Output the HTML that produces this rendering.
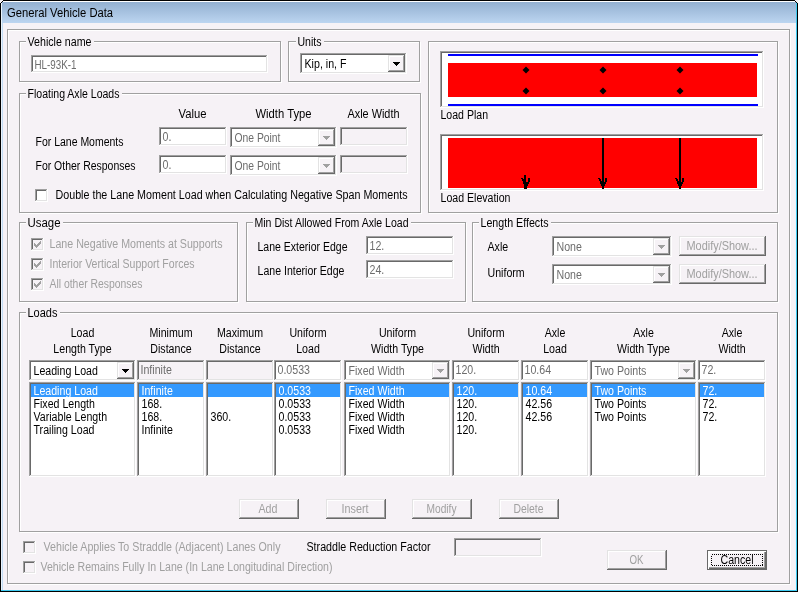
<!DOCTYPE html>
<html><head><meta charset="utf-8"><style>
html,body{margin:0;padding:0;background:#f6f2f6;overflow:hidden}
svg{display:block;will-change:transform}
text{font-family:"Liberation Sans",sans-serif}
rect{shape-rendering:crispEdges}
</style></head><body>
<svg width="798" height="592" viewBox="0 0 798 592">
<rect x="0" y="0" width="798" height="592" fill="#000"/>
<rect x="1" y="1" width="796" height="590" fill="#eaf4fc"/>
<rect x="1" y="1" width="796" height="1" fill="#ffffff"/>
<defs><linearGradient id="tb" x1="0" y1="0" x2="0" y2="1"><stop offset="0" stop-color="#93b0d1"/><stop offset="1" stop-color="#bcd5f0"/></linearGradient></defs>
<rect x="2" y="2" width="794" height="21" fill="url(#tb)"/>
<rect x="3" y="23" width="792" height="567" fill="#f6f2f6"/>
<rect x="2" y="23" width="1" height="567" fill="#c2dcf4"/>
<rect x="796" y="1" width="1" height="590" fill="#3fcaf0"/>
<rect x="1" y="590" width="796" height="1" fill="#3fcaf0"/>
<text x="7.1" y="17" fill="#000" font-size="12.5" textLength="105.99" lengthAdjust="spacingAndGlyphs">General Vehicle Data</text>
<rect x="0" y="0" width="1" height="1" fill="#f6f2f6"/>
<rect x="1" y="0" width="1" height="1" fill="#f6f2f6"/>
<rect x="2" y="0" width="1" height="1" fill="#f6f2f6"/>
<rect x="0" y="1" width="1" height="1" fill="#f6f2f6"/>
<rect x="0" y="2" width="1" height="1" fill="#f6f2f6"/>
<rect x="1" y="1" width="1" height="1" fill="#f6f2f6"/>
<rect x="3" y="0" width="1" height="1" fill="#000"/>
<rect x="2" y="1" width="1" height="1" fill="#000"/>
<rect x="1" y="2" width="1" height="1" fill="#000"/>
<rect x="0" y="3" width="1" height="1" fill="#000"/>
<rect x="797" y="0" width="1" height="1" fill="#f6f2f6"/>
<rect x="796" y="0" width="1" height="1" fill="#f6f2f6"/>
<rect x="795" y="0" width="1" height="1" fill="#f6f2f6"/>
<rect x="797" y="1" width="1" height="1" fill="#f6f2f6"/>
<rect x="797" y="2" width="1" height="1" fill="#f6f2f6"/>
<rect x="796" y="1" width="1" height="1" fill="#f6f2f6"/>
<rect x="794" y="0" width="1" height="1" fill="#000"/>
<rect x="795" y="1" width="1" height="1" fill="#000"/>
<rect x="796" y="2" width="1" height="1" fill="#000"/>
<rect x="797" y="3" width="1" height="1" fill="#000"/>
<rect x="8" y="30" width="783" height="1" fill="#ffffff"/>
<rect x="8" y="584" width="783" height="1" fill="#ffffff"/>
<rect x="8" y="30" width="1" height="555" fill="#ffffff"/>
<rect x="790" y="30" width="1" height="555" fill="#ffffff"/>
<rect x="7" y="29" width="783" height="1" fill="#a0a0a0"/>
<rect x="7" y="583" width="783" height="1" fill="#a0a0a0"/>
<rect x="7" y="29" width="1" height="555" fill="#a0a0a0"/>
<rect x="789" y="29" width="1" height="555" fill="#a0a0a0"/>
<rect x="20" y="42" width="262" height="1" fill="#ffffff"/>
<rect x="20" y="82" width="262" height="1" fill="#ffffff"/>
<rect x="20" y="42" width="1" height="41" fill="#ffffff"/>
<rect x="281" y="42" width="1" height="41" fill="#ffffff"/>
<rect x="19" y="41" width="262" height="1" fill="#a0a0a0"/>
<rect x="19" y="81" width="262" height="1" fill="#a0a0a0"/>
<rect x="19" y="41" width="1" height="41" fill="#a0a0a0"/>
<rect x="280" y="41" width="1" height="41" fill="#a0a0a0"/>
<rect x="26" y="39" width="68" height="5" fill="#f6f2f6"/>
<text x="27.5" y="46" fill="#000" font-size="12" textLength="64.0" lengthAdjust="spacingAndGlyphs">Vehicle name</text>
<rect x="31" y="55" width="237" height="18" fill="#ffffff"/>
<rect x="31" y="55" width="237" height="1" fill="#a0a0a0"/>
<rect x="31" y="55" width="1" height="18" fill="#a0a0a0"/>
<rect x="31" y="72" width="237" height="1" fill="#ffffff"/>
<rect x="267" y="55" width="1" height="18" fill="#ffffff"/>
<rect x="32" y="56" width="235" height="1" fill="#696969"/>
<rect x="32" y="56" width="1" height="16" fill="#696969"/>
<rect x="32" y="71" width="235" height="1" fill="#e3e3e3"/>
<rect x="266" y="56" width="1" height="16" fill="#e3e3e3"/>
<text x="34.5" y="69" fill="#6d6d6d" font-size="12" textLength="42.0" lengthAdjust="spacingAndGlyphs">HL-93K-1</text>
<rect x="289" y="42" width="132" height="1" fill="#ffffff"/>
<rect x="289" y="82" width="132" height="1" fill="#ffffff"/>
<rect x="289" y="42" width="1" height="41" fill="#ffffff"/>
<rect x="420" y="42" width="1" height="41" fill="#ffffff"/>
<rect x="288" y="41" width="132" height="1" fill="#a0a0a0"/>
<rect x="288" y="81" width="132" height="1" fill="#a0a0a0"/>
<rect x="288" y="41" width="1" height="41" fill="#a0a0a0"/>
<rect x="419" y="41" width="1" height="41" fill="#a0a0a0"/>
<rect x="296" y="39" width="28" height="5" fill="#f6f2f6"/>
<text x="297.5" y="46" fill="#000" font-size="12" textLength="24.0" lengthAdjust="spacingAndGlyphs">Units</text>
<rect x="300" y="53" width="107" height="21" fill="#ffffff"/>
<rect x="300" y="53" width="107" height="1" fill="#a0a0a0"/>
<rect x="300" y="53" width="1" height="21" fill="#a0a0a0"/>
<rect x="300" y="73" width="107" height="1" fill="#ffffff"/>
<rect x="406" y="53" width="1" height="21" fill="#ffffff"/>
<rect x="301" y="54" width="105" height="1" fill="#696969"/>
<rect x="301" y="54" width="1" height="19" fill="#696969"/>
<rect x="301" y="72" width="105" height="1" fill="#e3e3e3"/>
<rect x="405" y="54" width="1" height="19" fill="#e3e3e3"/>
<rect x="388" y="55" width="17" height="17" fill="#f6f2f6"/>
<rect x="388" y="71" width="17" height="1" fill="#696969"/>
<rect x="404" y="55" width="1" height="17" fill="#696969"/>
<rect x="388" y="55" width="16" height="1" fill="#e3e3e3"/>
<rect x="388" y="55" width="1" height="16" fill="#e3e3e3"/>
<rect x="389" y="70" width="15" height="1" fill="#a0a0a0"/>
<rect x="403" y="56" width="1" height="15" fill="#a0a0a0"/>
<rect x="389" y="56" width="14" height="1" fill="#ffffff"/>
<rect x="389" y="56" width="1" height="14" fill="#ffffff"/>
<rect x="393" y="62" width="7" height="1" fill="#000"/>
<rect x="394" y="63" width="5" height="1" fill="#000"/>
<rect x="395" y="64" width="3" height="1" fill="#000"/>
<rect x="396" y="65" width="1" height="1" fill="#000"/>
<text x="304.5" y="68" fill="#000" font-size="12" textLength="42.0" lengthAdjust="spacingAndGlyphs">Kip, in, F</text>
<rect x="429" y="42" width="350" height="1" fill="#ffffff"/>
<rect x="429" y="213" width="350" height="1" fill="#ffffff"/>
<rect x="429" y="42" width="1" height="172" fill="#ffffff"/>
<rect x="778" y="42" width="1" height="172" fill="#ffffff"/>
<rect x="428" y="41" width="350" height="1" fill="#a0a0a0"/>
<rect x="428" y="212" width="350" height="1" fill="#a0a0a0"/>
<rect x="428" y="41" width="1" height="172" fill="#a0a0a0"/>
<rect x="777" y="41" width="1" height="172" fill="#a0a0a0"/>
<rect x="440" y="51" width="324" height="57" fill="#ffffff"/>
<rect x="440" y="51" width="324" height="1" fill="#a0a0a0"/>
<rect x="440" y="51" width="1" height="57" fill="#a0a0a0"/>
<rect x="440" y="107" width="324" height="1" fill="#ffffff"/>
<rect x="763" y="51" width="1" height="57" fill="#ffffff"/>
<rect x="441" y="52" width="322" height="1" fill="#696969"/>
<rect x="441" y="52" width="1" height="55" fill="#696969"/>
<rect x="441" y="106" width="322" height="1" fill="#e3e3e3"/>
<rect x="762" y="52" width="1" height="55" fill="#e3e3e3"/>
<rect x="448" y="63" width="309" height="34" fill="#ff0000"/>
<rect x="448" y="54" width="310" height="2" fill="#0000ff"/>
<rect x="448" y="104" width="310" height="2" fill="#0000ff"/>
<path d="M522.5 70 L526 66.5 L529.5 70 L526 73.5 Z" fill="#000"/>
<path d="M522.5 91 L526 87.5 L529.5 91 L526 94.5 Z" fill="#000"/>
<path d="M599.5 70 L603 66.5 L606.5 70 L603 73.5 Z" fill="#000"/>
<path d="M599.5 91 L603 87.5 L606.5 91 L603 94.5 Z" fill="#000"/>
<path d="M676.5 70 L680 66.5 L683.5 70 L680 73.5 Z" fill="#000"/>
<path d="M676.5 91 L680 87.5 L683.5 91 L680 94.5 Z" fill="#000"/>
<text x="440.5" y="119" fill="#000" font-size="12" textLength="47.5" lengthAdjust="spacingAndGlyphs">Load Plan</text>
<rect x="440" y="134" width="324" height="57" fill="#ffffff"/>
<rect x="440" y="134" width="324" height="1" fill="#a0a0a0"/>
<rect x="440" y="134" width="1" height="57" fill="#a0a0a0"/>
<rect x="440" y="190" width="324" height="1" fill="#ffffff"/>
<rect x="763" y="134" width="1" height="57" fill="#ffffff"/>
<rect x="441" y="135" width="322" height="1" fill="#696969"/>
<rect x="441" y="135" width="1" height="55" fill="#696969"/>
<rect x="441" y="189" width="322" height="1" fill="#e3e3e3"/>
<rect x="762" y="135" width="1" height="55" fill="#e3e3e3"/>
<rect x="448" y="138" width="309" height="50" fill="#ff0000"/>
<rect x="524" y="175" width="2" height="14" fill="#000"/>
<rect x="521" y="178" width="2" height="1" fill="#000"/>
<rect x="528" y="178" width="2" height="1" fill="#000"/>
<rect x="522" y="179" width="2" height="1" fill="#000"/>
<rect x="528" y="179" width="2" height="1" fill="#000"/>
<rect x="522" y="180" width="2" height="1" fill="#000"/>
<rect x="528" y="180" width="2" height="1" fill="#000"/>
<rect x="523" y="181" width="2" height="1" fill="#000"/>
<rect x="528" y="181" width="2" height="1" fill="#000"/>
<rect x="523" y="182" width="6" height="1" fill="#000"/>
<rect x="523" y="183" width="6" height="1" fill="#000"/>
<rect x="524" y="184" width="4" height="1" fill="#000"/>
<rect x="524" y="185" width="4" height="1" fill="#000"/>
<rect x="525" y="186" width="2" height="1" fill="#000"/>
<rect x="525" y="187" width="2" height="1" fill="#000"/>
<rect x="525" y="188" width="2" height="1" fill="#000"/>
<rect x="602" y="138" width="2" height="51" fill="#000"/>
<rect x="598" y="178" width="2" height="1" fill="#000"/>
<rect x="605" y="178" width="2" height="1" fill="#000"/>
<rect x="599" y="179" width="2" height="1" fill="#000"/>
<rect x="605" y="179" width="2" height="1" fill="#000"/>
<rect x="599" y="180" width="2" height="1" fill="#000"/>
<rect x="605" y="180" width="2" height="1" fill="#000"/>
<rect x="600" y="181" width="2" height="1" fill="#000"/>
<rect x="605" y="181" width="2" height="1" fill="#000"/>
<rect x="600" y="182" width="6" height="1" fill="#000"/>
<rect x="600" y="183" width="6" height="1" fill="#000"/>
<rect x="601" y="184" width="4" height="1" fill="#000"/>
<rect x="601" y="185" width="4" height="1" fill="#000"/>
<rect x="602" y="186" width="2" height="1" fill="#000"/>
<rect x="602" y="187" width="2" height="1" fill="#000"/>
<rect x="602" y="188" width="2" height="1" fill="#000"/>
<rect x="679" y="138" width="2" height="51" fill="#000"/>
<rect x="675" y="178" width="2" height="1" fill="#000"/>
<rect x="682" y="178" width="2" height="1" fill="#000"/>
<rect x="676" y="179" width="2" height="1" fill="#000"/>
<rect x="682" y="179" width="2" height="1" fill="#000"/>
<rect x="676" y="180" width="2" height="1" fill="#000"/>
<rect x="682" y="180" width="2" height="1" fill="#000"/>
<rect x="677" y="181" width="2" height="1" fill="#000"/>
<rect x="682" y="181" width="2" height="1" fill="#000"/>
<rect x="677" y="182" width="6" height="1" fill="#000"/>
<rect x="677" y="183" width="6" height="1" fill="#000"/>
<rect x="678" y="184" width="4" height="1" fill="#000"/>
<rect x="678" y="185" width="4" height="1" fill="#000"/>
<rect x="679" y="186" width="2" height="1" fill="#000"/>
<rect x="679" y="187" width="2" height="1" fill="#000"/>
<rect x="679" y="188" width="2" height="1" fill="#000"/>
<text x="440.5" y="202" fill="#000" font-size="12" textLength="70.0" lengthAdjust="spacingAndGlyphs">Load Elevation</text>
<rect x="20" y="94" width="402" height="1" fill="#ffffff"/>
<rect x="20" y="213" width="402" height="1" fill="#ffffff"/>
<rect x="20" y="94" width="1" height="120" fill="#ffffff"/>
<rect x="421" y="94" width="1" height="120" fill="#ffffff"/>
<rect x="19" y="93" width="402" height="1" fill="#a0a0a0"/>
<rect x="19" y="212" width="402" height="1" fill="#a0a0a0"/>
<rect x="19" y="93" width="1" height="120" fill="#a0a0a0"/>
<rect x="420" y="93" width="1" height="120" fill="#a0a0a0"/>
<rect x="26" y="91" width="96" height="5" fill="#f6f2f6"/>
<text x="27.5" y="98" fill="#000" font-size="12" textLength="92.0" lengthAdjust="spacingAndGlyphs">Floating Axle Loads</text>
<text x="178.5" y="118" fill="#000" font-size="12" textLength="28.0" lengthAdjust="spacingAndGlyphs">Value</text>
<text x="255.5" y="118" fill="#000" font-size="12" textLength="56.0" lengthAdjust="spacingAndGlyphs">Width Type</text>
<text x="347.5" y="118" fill="#000" font-size="12" textLength="52.0" lengthAdjust="spacingAndGlyphs">Axle Width</text>
<text x="35.5" y="146" fill="#000" font-size="12" textLength="88.0" lengthAdjust="spacingAndGlyphs">For Lane Moments</text>
<text x="35.5" y="170" fill="#000" font-size="12" textLength="100.0" lengthAdjust="spacingAndGlyphs">For Other Responses</text>
<rect x="159" y="127" width="68" height="19" fill="#ffffff"/>
<rect x="159" y="127" width="68" height="1" fill="#a0a0a0"/>
<rect x="159" y="127" width="1" height="19" fill="#a0a0a0"/>
<rect x="159" y="145" width="68" height="1" fill="#ffffff"/>
<rect x="226" y="127" width="1" height="19" fill="#ffffff"/>
<rect x="160" y="128" width="66" height="1" fill="#696969"/>
<rect x="160" y="128" width="1" height="17" fill="#696969"/>
<rect x="160" y="144" width="66" height="1" fill="#e3e3e3"/>
<rect x="225" y="128" width="1" height="17" fill="#e3e3e3"/>
<text x="162.5" y="141" fill="#6d6d6d" font-size="12" textLength="8.86" lengthAdjust="spacingAndGlyphs">0.</text>
<rect x="230" y="127" width="107" height="21" fill="#ffffff"/>
<rect x="230" y="127" width="107" height="1" fill="#a0a0a0"/>
<rect x="230" y="127" width="1" height="21" fill="#a0a0a0"/>
<rect x="230" y="147" width="107" height="1" fill="#ffffff"/>
<rect x="336" y="127" width="1" height="21" fill="#ffffff"/>
<rect x="231" y="128" width="105" height="1" fill="#696969"/>
<rect x="231" y="128" width="1" height="19" fill="#696969"/>
<rect x="231" y="146" width="105" height="1" fill="#e3e3e3"/>
<rect x="335" y="128" width="1" height="19" fill="#e3e3e3"/>
<rect x="318" y="129" width="17" height="17" fill="#f6f2f6"/>
<rect x="318" y="145" width="17" height="1" fill="#696969"/>
<rect x="334" y="129" width="1" height="17" fill="#696969"/>
<rect x="318" y="129" width="16" height="1" fill="#e3e3e3"/>
<rect x="318" y="129" width="1" height="16" fill="#e3e3e3"/>
<rect x="319" y="144" width="15" height="1" fill="#a0a0a0"/>
<rect x="333" y="130" width="1" height="15" fill="#a0a0a0"/>
<rect x="319" y="130" width="14" height="1" fill="#ffffff"/>
<rect x="319" y="130" width="1" height="14" fill="#ffffff"/>
<rect x="323" y="136" width="7" height="1" fill="#a0a0a0"/>
<rect x="324" y="137" width="5" height="1" fill="#a0a0a0"/>
<rect x="325" y="138" width="3" height="1" fill="#a0a0a0"/>
<rect x="326" y="139" width="1" height="1" fill="#a0a0a0"/>
<text x="234.5" y="142" fill="#6d6d6d" font-size="12" textLength="46.0" lengthAdjust="spacingAndGlyphs">One Point</text>
<rect x="340" y="127" width="68" height="19" fill="#f6f2f6"/>
<rect x="340" y="127" width="68" height="1" fill="#a0a0a0"/>
<rect x="340" y="127" width="1" height="19" fill="#a0a0a0"/>
<rect x="340" y="145" width="68" height="1" fill="#ffffff"/>
<rect x="407" y="127" width="1" height="19" fill="#ffffff"/>
<rect x="341" y="128" width="66" height="1" fill="#696969"/>
<rect x="341" y="128" width="1" height="17" fill="#696969"/>
<rect x="341" y="144" width="66" height="1" fill="#e3e3e3"/>
<rect x="406" y="128" width="1" height="17" fill="#e3e3e3"/>
<rect x="159" y="155" width="68" height="19" fill="#ffffff"/>
<rect x="159" y="155" width="68" height="1" fill="#a0a0a0"/>
<rect x="159" y="155" width="1" height="19" fill="#a0a0a0"/>
<rect x="159" y="173" width="68" height="1" fill="#ffffff"/>
<rect x="226" y="155" width="1" height="19" fill="#ffffff"/>
<rect x="160" y="156" width="66" height="1" fill="#696969"/>
<rect x="160" y="156" width="1" height="17" fill="#696969"/>
<rect x="160" y="172" width="66" height="1" fill="#e3e3e3"/>
<rect x="225" y="156" width="1" height="17" fill="#e3e3e3"/>
<text x="162.5" y="169" fill="#6d6d6d" font-size="12" textLength="8.86" lengthAdjust="spacingAndGlyphs">0.</text>
<rect x="230" y="155" width="107" height="21" fill="#ffffff"/>
<rect x="230" y="155" width="107" height="1" fill="#a0a0a0"/>
<rect x="230" y="155" width="1" height="21" fill="#a0a0a0"/>
<rect x="230" y="175" width="107" height="1" fill="#ffffff"/>
<rect x="336" y="155" width="1" height="21" fill="#ffffff"/>
<rect x="231" y="156" width="105" height="1" fill="#696969"/>
<rect x="231" y="156" width="1" height="19" fill="#696969"/>
<rect x="231" y="174" width="105" height="1" fill="#e3e3e3"/>
<rect x="335" y="156" width="1" height="19" fill="#e3e3e3"/>
<rect x="318" y="157" width="17" height="17" fill="#f6f2f6"/>
<rect x="318" y="173" width="17" height="1" fill="#696969"/>
<rect x="334" y="157" width="1" height="17" fill="#696969"/>
<rect x="318" y="157" width="16" height="1" fill="#e3e3e3"/>
<rect x="318" y="157" width="1" height="16" fill="#e3e3e3"/>
<rect x="319" y="172" width="15" height="1" fill="#a0a0a0"/>
<rect x="333" y="158" width="1" height="15" fill="#a0a0a0"/>
<rect x="319" y="158" width="14" height="1" fill="#ffffff"/>
<rect x="319" y="158" width="1" height="14" fill="#ffffff"/>
<rect x="323" y="164" width="7" height="1" fill="#a0a0a0"/>
<rect x="324" y="165" width="5" height="1" fill="#a0a0a0"/>
<rect x="325" y="166" width="3" height="1" fill="#a0a0a0"/>
<rect x="326" y="167" width="1" height="1" fill="#a0a0a0"/>
<text x="234.5" y="170" fill="#6d6d6d" font-size="12" textLength="46.0" lengthAdjust="spacingAndGlyphs">One Point</text>
<rect x="340" y="155" width="68" height="19" fill="#f6f2f6"/>
<rect x="340" y="155" width="68" height="1" fill="#a0a0a0"/>
<rect x="340" y="155" width="1" height="19" fill="#a0a0a0"/>
<rect x="340" y="173" width="68" height="1" fill="#ffffff"/>
<rect x="407" y="155" width="1" height="19" fill="#ffffff"/>
<rect x="341" y="156" width="66" height="1" fill="#696969"/>
<rect x="341" y="156" width="1" height="17" fill="#696969"/>
<rect x="341" y="172" width="66" height="1" fill="#e3e3e3"/>
<rect x="406" y="156" width="1" height="17" fill="#e3e3e3"/>
<rect x="35" y="189" width="13" height="13" fill="#ffffff"/>
<rect x="35" y="189" width="13" height="1" fill="#a0a0a0"/>
<rect x="35" y="189" width="1" height="13" fill="#a0a0a0"/>
<rect x="35" y="201" width="13" height="1" fill="#ffffff"/>
<rect x="47" y="189" width="1" height="13" fill="#ffffff"/>
<rect x="36" y="190" width="11" height="1" fill="#696969"/>
<rect x="36" y="190" width="1" height="11" fill="#696969"/>
<rect x="36" y="200" width="11" height="1" fill="#e3e3e3"/>
<rect x="46" y="190" width="1" height="11" fill="#e3e3e3"/>
<text x="55.5" y="199" fill="#000" font-size="12" textLength="352.0" lengthAdjust="spacingAndGlyphs">Double the Lane Moment Load when Calculating Negative Span Moments</text>
<rect x="20" y="223" width="219" height="1" fill="#ffffff"/>
<rect x="20" y="302" width="219" height="1" fill="#ffffff"/>
<rect x="20" y="223" width="1" height="80" fill="#ffffff"/>
<rect x="238" y="223" width="1" height="80" fill="#ffffff"/>
<rect x="19" y="222" width="219" height="1" fill="#a0a0a0"/>
<rect x="19" y="301" width="219" height="1" fill="#a0a0a0"/>
<rect x="19" y="222" width="1" height="80" fill="#a0a0a0"/>
<rect x="237" y="222" width="1" height="80" fill="#a0a0a0"/>
<rect x="26" y="220" width="37" height="5" fill="#f6f2f6"/>
<text x="27.5" y="227" fill="#000" font-size="12" textLength="33.0" lengthAdjust="spacingAndGlyphs">Usage</text>
<rect x="31" y="238" width="13" height="13" fill="#f6f2f6"/>
<rect x="31" y="238" width="13" height="1" fill="#a0a0a0"/>
<rect x="31" y="238" width="1" height="13" fill="#a0a0a0"/>
<rect x="31" y="250" width="13" height="1" fill="#ffffff"/>
<rect x="43" y="238" width="1" height="13" fill="#ffffff"/>
<rect x="32" y="239" width="11" height="1" fill="#696969"/>
<rect x="32" y="239" width="1" height="11" fill="#696969"/>
<rect x="32" y="249" width="11" height="1" fill="#e3e3e3"/>
<rect x="42" y="239" width="1" height="11" fill="#e3e3e3"/>
<rect x="40" y="241" width="1" height="1" fill="#a0a0a0"/>
<rect x="39" y="242" width="1" height="1" fill="#a0a0a0"/>
<rect x="40" y="242" width="1" height="1" fill="#a0a0a0"/>
<rect x="34" y="243" width="1" height="1" fill="#a0a0a0"/>
<rect x="38" y="243" width="1" height="1" fill="#a0a0a0"/>
<rect x="39" y="243" width="1" height="1" fill="#a0a0a0"/>
<rect x="40" y="243" width="1" height="1" fill="#a0a0a0"/>
<rect x="34" y="244" width="1" height="1" fill="#a0a0a0"/>
<rect x="35" y="244" width="1" height="1" fill="#a0a0a0"/>
<rect x="37" y="244" width="1" height="1" fill="#a0a0a0"/>
<rect x="38" y="244" width="1" height="1" fill="#a0a0a0"/>
<rect x="39" y="244" width="1" height="1" fill="#a0a0a0"/>
<rect x="34" y="245" width="1" height="1" fill="#a0a0a0"/>
<rect x="35" y="245" width="1" height="1" fill="#a0a0a0"/>
<rect x="36" y="245" width="1" height="1" fill="#a0a0a0"/>
<rect x="37" y="245" width="1" height="1" fill="#a0a0a0"/>
<rect x="38" y="245" width="1" height="1" fill="#a0a0a0"/>
<rect x="35" y="246" width="1" height="1" fill="#a0a0a0"/>
<rect x="36" y="246" width="1" height="1" fill="#a0a0a0"/>
<rect x="37" y="246" width="1" height="1" fill="#a0a0a0"/>
<rect x="36" y="247" width="1" height="1" fill="#a0a0a0"/>
<text x="49.5" y="248" fill="#a0a0a0" font-size="12" textLength="173.0" lengthAdjust="spacingAndGlyphs">Lane Negative Moments at Supports</text>
<rect x="31" y="258" width="13" height="13" fill="#f6f2f6"/>
<rect x="31" y="258" width="13" height="1" fill="#a0a0a0"/>
<rect x="31" y="258" width="1" height="13" fill="#a0a0a0"/>
<rect x="31" y="270" width="13" height="1" fill="#ffffff"/>
<rect x="43" y="258" width="1" height="13" fill="#ffffff"/>
<rect x="32" y="259" width="11" height="1" fill="#696969"/>
<rect x="32" y="259" width="1" height="11" fill="#696969"/>
<rect x="32" y="269" width="11" height="1" fill="#e3e3e3"/>
<rect x="42" y="259" width="1" height="11" fill="#e3e3e3"/>
<rect x="40" y="261" width="1" height="1" fill="#a0a0a0"/>
<rect x="39" y="262" width="1" height="1" fill="#a0a0a0"/>
<rect x="40" y="262" width="1" height="1" fill="#a0a0a0"/>
<rect x="34" y="263" width="1" height="1" fill="#a0a0a0"/>
<rect x="38" y="263" width="1" height="1" fill="#a0a0a0"/>
<rect x="39" y="263" width="1" height="1" fill="#a0a0a0"/>
<rect x="40" y="263" width="1" height="1" fill="#a0a0a0"/>
<rect x="34" y="264" width="1" height="1" fill="#a0a0a0"/>
<rect x="35" y="264" width="1" height="1" fill="#a0a0a0"/>
<rect x="37" y="264" width="1" height="1" fill="#a0a0a0"/>
<rect x="38" y="264" width="1" height="1" fill="#a0a0a0"/>
<rect x="39" y="264" width="1" height="1" fill="#a0a0a0"/>
<rect x="34" y="265" width="1" height="1" fill="#a0a0a0"/>
<rect x="35" y="265" width="1" height="1" fill="#a0a0a0"/>
<rect x="36" y="265" width="1" height="1" fill="#a0a0a0"/>
<rect x="37" y="265" width="1" height="1" fill="#a0a0a0"/>
<rect x="38" y="265" width="1" height="1" fill="#a0a0a0"/>
<rect x="35" y="266" width="1" height="1" fill="#a0a0a0"/>
<rect x="36" y="266" width="1" height="1" fill="#a0a0a0"/>
<rect x="37" y="266" width="1" height="1" fill="#a0a0a0"/>
<rect x="36" y="267" width="1" height="1" fill="#a0a0a0"/>
<text x="49.5" y="268" fill="#a0a0a0" font-size="12" textLength="145.0" lengthAdjust="spacingAndGlyphs">Interior Vertical Support Forces</text>
<rect x="31" y="278" width="13" height="13" fill="#f6f2f6"/>
<rect x="31" y="278" width="13" height="1" fill="#a0a0a0"/>
<rect x="31" y="278" width="1" height="13" fill="#a0a0a0"/>
<rect x="31" y="290" width="13" height="1" fill="#ffffff"/>
<rect x="43" y="278" width="1" height="13" fill="#ffffff"/>
<rect x="32" y="279" width="11" height="1" fill="#696969"/>
<rect x="32" y="279" width="1" height="11" fill="#696969"/>
<rect x="32" y="289" width="11" height="1" fill="#e3e3e3"/>
<rect x="42" y="279" width="1" height="11" fill="#e3e3e3"/>
<rect x="40" y="281" width="1" height="1" fill="#a0a0a0"/>
<rect x="39" y="282" width="1" height="1" fill="#a0a0a0"/>
<rect x="40" y="282" width="1" height="1" fill="#a0a0a0"/>
<rect x="34" y="283" width="1" height="1" fill="#a0a0a0"/>
<rect x="38" y="283" width="1" height="1" fill="#a0a0a0"/>
<rect x="39" y="283" width="1" height="1" fill="#a0a0a0"/>
<rect x="40" y="283" width="1" height="1" fill="#a0a0a0"/>
<rect x="34" y="284" width="1" height="1" fill="#a0a0a0"/>
<rect x="35" y="284" width="1" height="1" fill="#a0a0a0"/>
<rect x="37" y="284" width="1" height="1" fill="#a0a0a0"/>
<rect x="38" y="284" width="1" height="1" fill="#a0a0a0"/>
<rect x="39" y="284" width="1" height="1" fill="#a0a0a0"/>
<rect x="34" y="285" width="1" height="1" fill="#a0a0a0"/>
<rect x="35" y="285" width="1" height="1" fill="#a0a0a0"/>
<rect x="36" y="285" width="1" height="1" fill="#a0a0a0"/>
<rect x="37" y="285" width="1" height="1" fill="#a0a0a0"/>
<rect x="38" y="285" width="1" height="1" fill="#a0a0a0"/>
<rect x="35" y="286" width="1" height="1" fill="#a0a0a0"/>
<rect x="36" y="286" width="1" height="1" fill="#a0a0a0"/>
<rect x="37" y="286" width="1" height="1" fill="#a0a0a0"/>
<rect x="36" y="287" width="1" height="1" fill="#a0a0a0"/>
<text x="49.5" y="288" fill="#a0a0a0" font-size="12" textLength="93.0" lengthAdjust="spacingAndGlyphs">All other Responses</text>
<rect x="247" y="223" width="220" height="1" fill="#ffffff"/>
<rect x="247" y="302" width="220" height="1" fill="#ffffff"/>
<rect x="247" y="223" width="1" height="80" fill="#ffffff"/>
<rect x="466" y="223" width="1" height="80" fill="#ffffff"/>
<rect x="246" y="222" width="220" height="1" fill="#a0a0a0"/>
<rect x="246" y="301" width="220" height="1" fill="#a0a0a0"/>
<rect x="246" y="222" width="1" height="80" fill="#a0a0a0"/>
<rect x="465" y="222" width="1" height="80" fill="#a0a0a0"/>
<rect x="253" y="220" width="158" height="5" fill="#f6f2f6"/>
<text x="254.5" y="227" fill="#000" font-size="12" textLength="154.0" lengthAdjust="spacingAndGlyphs">Min Dist Allowed From Axle Load</text>
<text x="257.5" y="251" fill="#000" font-size="12" textLength="90.0" lengthAdjust="spacingAndGlyphs">Lane Exterior Edge</text>
<text x="257.5" y="275" fill="#000" font-size="12" textLength="87.0" lengthAdjust="spacingAndGlyphs">Lane Interior Edge</text>
<rect x="366" y="236" width="88" height="19" fill="#ffffff"/>
<rect x="366" y="236" width="88" height="1" fill="#a0a0a0"/>
<rect x="366" y="236" width="1" height="19" fill="#a0a0a0"/>
<rect x="366" y="254" width="88" height="1" fill="#ffffff"/>
<rect x="453" y="236" width="1" height="19" fill="#ffffff"/>
<rect x="367" y="237" width="86" height="1" fill="#696969"/>
<rect x="367" y="237" width="1" height="17" fill="#696969"/>
<rect x="367" y="253" width="86" height="1" fill="#e3e3e3"/>
<rect x="452" y="237" width="1" height="17" fill="#e3e3e3"/>
<text x="369.5" y="250" fill="#6d6d6d" font-size="12" textLength="14.76" lengthAdjust="spacingAndGlyphs">12.</text>
<rect x="366" y="260" width="88" height="19" fill="#ffffff"/>
<rect x="366" y="260" width="88" height="1" fill="#a0a0a0"/>
<rect x="366" y="260" width="1" height="19" fill="#a0a0a0"/>
<rect x="366" y="278" width="88" height="1" fill="#ffffff"/>
<rect x="453" y="260" width="1" height="19" fill="#ffffff"/>
<rect x="367" y="261" width="86" height="1" fill="#696969"/>
<rect x="367" y="261" width="1" height="17" fill="#696969"/>
<rect x="367" y="277" width="86" height="1" fill="#e3e3e3"/>
<rect x="452" y="261" width="1" height="17" fill="#e3e3e3"/>
<text x="369.5" y="274" fill="#6d6d6d" font-size="12" textLength="14.76" lengthAdjust="spacingAndGlyphs">24.</text>
<rect x="473" y="223" width="306" height="1" fill="#ffffff"/>
<rect x="473" y="302" width="306" height="1" fill="#ffffff"/>
<rect x="473" y="223" width="1" height="80" fill="#ffffff"/>
<rect x="778" y="223" width="1" height="80" fill="#ffffff"/>
<rect x="472" y="222" width="306" height="1" fill="#a0a0a0"/>
<rect x="472" y="301" width="306" height="1" fill="#a0a0a0"/>
<rect x="472" y="222" width="1" height="80" fill="#a0a0a0"/>
<rect x="777" y="222" width="1" height="80" fill="#a0a0a0"/>
<rect x="479" y="220" width="72" height="5" fill="#f6f2f6"/>
<text x="480.5" y="227" fill="#000" font-size="12" textLength="68.0" lengthAdjust="spacingAndGlyphs">Length Effects</text>
<text x="487.5" y="251" fill="#000" font-size="12" textLength="20.66" lengthAdjust="spacingAndGlyphs">Axle</text>
<text x="487.5" y="277" fill="#000" font-size="12" textLength="37.18" lengthAdjust="spacingAndGlyphs">Uniform</text>
<rect x="552" y="236" width="120" height="21" fill="#ffffff"/>
<rect x="552" y="236" width="120" height="1" fill="#a0a0a0"/>
<rect x="552" y="236" width="1" height="21" fill="#a0a0a0"/>
<rect x="552" y="256" width="120" height="1" fill="#ffffff"/>
<rect x="671" y="236" width="1" height="21" fill="#ffffff"/>
<rect x="553" y="237" width="118" height="1" fill="#696969"/>
<rect x="553" y="237" width="1" height="19" fill="#696969"/>
<rect x="553" y="255" width="118" height="1" fill="#e3e3e3"/>
<rect x="670" y="237" width="1" height="19" fill="#e3e3e3"/>
<rect x="653" y="238" width="17" height="17" fill="#f6f2f6"/>
<rect x="653" y="254" width="17" height="1" fill="#696969"/>
<rect x="669" y="238" width="1" height="17" fill="#696969"/>
<rect x="653" y="238" width="16" height="1" fill="#e3e3e3"/>
<rect x="653" y="238" width="1" height="16" fill="#e3e3e3"/>
<rect x="654" y="253" width="15" height="1" fill="#a0a0a0"/>
<rect x="668" y="239" width="1" height="15" fill="#a0a0a0"/>
<rect x="654" y="239" width="14" height="1" fill="#ffffff"/>
<rect x="654" y="239" width="1" height="14" fill="#ffffff"/>
<rect x="658" y="245" width="7" height="1" fill="#a0a0a0"/>
<rect x="659" y="246" width="5" height="1" fill="#a0a0a0"/>
<rect x="660" y="247" width="3" height="1" fill="#a0a0a0"/>
<rect x="661" y="248" width="1" height="1" fill="#a0a0a0"/>
<text x="556.5" y="251" fill="#6d6d6d" font-size="12" textLength="25.39" lengthAdjust="spacingAndGlyphs">None</text>
<rect x="552" y="264" width="120" height="21" fill="#ffffff"/>
<rect x="552" y="264" width="120" height="1" fill="#a0a0a0"/>
<rect x="552" y="264" width="1" height="21" fill="#a0a0a0"/>
<rect x="552" y="284" width="120" height="1" fill="#ffffff"/>
<rect x="671" y="264" width="1" height="21" fill="#ffffff"/>
<rect x="553" y="265" width="118" height="1" fill="#696969"/>
<rect x="553" y="265" width="1" height="19" fill="#696969"/>
<rect x="553" y="283" width="118" height="1" fill="#e3e3e3"/>
<rect x="670" y="265" width="1" height="19" fill="#e3e3e3"/>
<rect x="653" y="266" width="17" height="17" fill="#f6f2f6"/>
<rect x="653" y="282" width="17" height="1" fill="#696969"/>
<rect x="669" y="266" width="1" height="17" fill="#696969"/>
<rect x="653" y="266" width="16" height="1" fill="#e3e3e3"/>
<rect x="653" y="266" width="1" height="16" fill="#e3e3e3"/>
<rect x="654" y="281" width="15" height="1" fill="#a0a0a0"/>
<rect x="668" y="267" width="1" height="15" fill="#a0a0a0"/>
<rect x="654" y="267" width="14" height="1" fill="#ffffff"/>
<rect x="654" y="267" width="1" height="14" fill="#ffffff"/>
<rect x="658" y="273" width="7" height="1" fill="#a0a0a0"/>
<rect x="659" y="274" width="5" height="1" fill="#a0a0a0"/>
<rect x="660" y="275" width="3" height="1" fill="#a0a0a0"/>
<rect x="661" y="276" width="1" height="1" fill="#a0a0a0"/>
<text x="556.5" y="279" fill="#6d6d6d" font-size="12" textLength="25.39" lengthAdjust="spacingAndGlyphs">None</text>
<rect x="679" y="236" width="87" height="20" fill="#f6f2f6"/>
<rect x="679" y="255" width="87" height="1" fill="#696969"/>
<rect x="765" y="236" width="1" height="20" fill="#696969"/>
<rect x="679" y="236" width="86" height="1" fill="#e3e3e3"/>
<rect x="679" y="236" width="1" height="19" fill="#e3e3e3"/>
<rect x="680" y="254" width="85" height="1" fill="#a0a0a0"/>
<rect x="764" y="237" width="1" height="18" fill="#a0a0a0"/>
<rect x="680" y="237" width="84" height="1" fill="#ffffff"/>
<rect x="680" y="237" width="1" height="17" fill="#ffffff"/>
<text x="686.5" y="250" fill="#a0a0a0" font-size="12" textLength="71.0" lengthAdjust="spacingAndGlyphs">Modify/Show...</text>
<rect x="679" y="264" width="87" height="20" fill="#f6f2f6"/>
<rect x="679" y="283" width="87" height="1" fill="#696969"/>
<rect x="765" y="264" width="1" height="20" fill="#696969"/>
<rect x="679" y="264" width="86" height="1" fill="#e3e3e3"/>
<rect x="679" y="264" width="1" height="19" fill="#e3e3e3"/>
<rect x="680" y="282" width="85" height="1" fill="#a0a0a0"/>
<rect x="764" y="265" width="1" height="18" fill="#a0a0a0"/>
<rect x="680" y="265" width="84" height="1" fill="#ffffff"/>
<rect x="680" y="265" width="1" height="17" fill="#ffffff"/>
<text x="686.5" y="278" fill="#a0a0a0" font-size="12" textLength="71.0" lengthAdjust="spacingAndGlyphs">Modify/Show...</text>
<rect x="20" y="313" width="759" height="1" fill="#ffffff"/>
<rect x="20" y="532" width="759" height="1" fill="#ffffff"/>
<rect x="20" y="313" width="1" height="220" fill="#ffffff"/>
<rect x="778" y="313" width="1" height="220" fill="#ffffff"/>
<rect x="19" y="312" width="759" height="1" fill="#a0a0a0"/>
<rect x="19" y="531" width="759" height="1" fill="#a0a0a0"/>
<rect x="19" y="312" width="1" height="220" fill="#a0a0a0"/>
<rect x="777" y="312" width="1" height="220" fill="#a0a0a0"/>
<rect x="26" y="310" width="34" height="5" fill="#f6f2f6"/>
<text x="27.5" y="317" fill="#000" font-size="12" textLength="30.0" lengthAdjust="spacingAndGlyphs">Loads</text>
<text x="82.5" y="337" fill="#000" font-size="12" textLength="23.63" lengthAdjust="spacingAndGlyphs" text-anchor="middle">Load</text>
<text x="82.5" y="353" fill="#000" font-size="12" textLength="58.27" lengthAdjust="spacingAndGlyphs" text-anchor="middle">Length Type</text>
<text x="171.0" y="337" fill="#000" font-size="12" textLength="43.07" lengthAdjust="spacingAndGlyphs" text-anchor="middle">Minimum</text>
<text x="171.0" y="353" fill="#000" font-size="12" textLength="41.32" lengthAdjust="spacingAndGlyphs" text-anchor="middle">Distance</text>
<text x="240.0" y="337" fill="#000" font-size="12" textLength="46.02" lengthAdjust="spacingAndGlyphs" text-anchor="middle">Maximum</text>
<text x="240.0" y="353" fill="#000" font-size="12" textLength="41.32" lengthAdjust="spacingAndGlyphs" text-anchor="middle">Distance</text>
<text x="308.0" y="337" fill="#000" font-size="12" textLength="37.18" lengthAdjust="spacingAndGlyphs" text-anchor="middle">Uniform</text>
<text x="308.0" y="353" fill="#000" font-size="12" textLength="23.63" lengthAdjust="spacingAndGlyphs" text-anchor="middle">Load</text>
<text x="397.5" y="337" fill="#000" font-size="12" textLength="37.18" lengthAdjust="spacingAndGlyphs" text-anchor="middle">Uniform</text>
<text x="397.5" y="353" fill="#000" font-size="12" textLength="52.93" lengthAdjust="spacingAndGlyphs" text-anchor="middle">Width Type</text>
<text x="486.0" y="337" fill="#000" font-size="12" textLength="37.18" lengthAdjust="spacingAndGlyphs" text-anchor="middle">Uniform</text>
<text x="486.0" y="353" fill="#000" font-size="12" textLength="27.15" lengthAdjust="spacingAndGlyphs" text-anchor="middle">Width</text>
<text x="555.0" y="337" fill="#000" font-size="12" textLength="20.66" lengthAdjust="spacingAndGlyphs" text-anchor="middle">Axle</text>
<text x="555.0" y="353" fill="#000" font-size="12" textLength="23.63" lengthAdjust="spacingAndGlyphs" text-anchor="middle">Load</text>
<text x="643.5" y="337" fill="#000" font-size="12" textLength="20.66" lengthAdjust="spacingAndGlyphs" text-anchor="middle">Axle</text>
<text x="643.5" y="353" fill="#000" font-size="12" textLength="52.93" lengthAdjust="spacingAndGlyphs" text-anchor="middle">Width Type</text>
<text x="732.0" y="337" fill="#000" font-size="12" textLength="20.66" lengthAdjust="spacingAndGlyphs" text-anchor="middle">Axle</text>
<text x="732.0" y="353" fill="#000" font-size="12" textLength="27.15" lengthAdjust="spacingAndGlyphs" text-anchor="middle">Width</text>
<rect x="29" y="360" width="107" height="21" fill="#ffffff"/>
<rect x="29" y="360" width="107" height="1" fill="#a0a0a0"/>
<rect x="29" y="360" width="1" height="21" fill="#a0a0a0"/>
<rect x="29" y="380" width="107" height="1" fill="#ffffff"/>
<rect x="135" y="360" width="1" height="21" fill="#ffffff"/>
<rect x="30" y="361" width="105" height="1" fill="#696969"/>
<rect x="30" y="361" width="1" height="19" fill="#696969"/>
<rect x="30" y="379" width="105" height="1" fill="#e3e3e3"/>
<rect x="134" y="361" width="1" height="19" fill="#e3e3e3"/>
<rect x="117" y="362" width="17" height="17" fill="#f6f2f6"/>
<rect x="117" y="378" width="17" height="1" fill="#696969"/>
<rect x="133" y="362" width="1" height="17" fill="#696969"/>
<rect x="117" y="362" width="16" height="1" fill="#e3e3e3"/>
<rect x="117" y="362" width="1" height="16" fill="#e3e3e3"/>
<rect x="118" y="377" width="15" height="1" fill="#a0a0a0"/>
<rect x="132" y="363" width="1" height="15" fill="#a0a0a0"/>
<rect x="118" y="363" width="14" height="1" fill="#ffffff"/>
<rect x="118" y="363" width="1" height="14" fill="#ffffff"/>
<rect x="122" y="369" width="7" height="1" fill="#000"/>
<rect x="123" y="370" width="5" height="1" fill="#000"/>
<rect x="124" y="371" width="3" height="1" fill="#000"/>
<rect x="125" y="372" width="1" height="1" fill="#000"/>
<text x="33.5" y="375" fill="#000" font-size="12" textLength="64.37" lengthAdjust="spacingAndGlyphs">Leading Load</text>
<rect x="137" y="360" width="68" height="21" fill="#f6f2f6"/>
<rect x="137" y="360" width="68" height="1" fill="#a0a0a0"/>
<rect x="137" y="360" width="1" height="21" fill="#a0a0a0"/>
<rect x="137" y="380" width="68" height="1" fill="#ffffff"/>
<rect x="204" y="360" width="1" height="21" fill="#ffffff"/>
<rect x="138" y="361" width="66" height="1" fill="#696969"/>
<rect x="138" y="361" width="1" height="19" fill="#696969"/>
<rect x="138" y="379" width="66" height="1" fill="#e3e3e3"/>
<rect x="203" y="361" width="1" height="19" fill="#e3e3e3"/>
<text x="140.5" y="374" fill="#6d6d6d" font-size="12" textLength="31.29" lengthAdjust="spacingAndGlyphs">Infinite</text>
<rect x="206" y="360" width="68" height="21" fill="#f6f2f6"/>
<rect x="206" y="360" width="68" height="1" fill="#a0a0a0"/>
<rect x="206" y="360" width="1" height="21" fill="#a0a0a0"/>
<rect x="206" y="380" width="68" height="1" fill="#ffffff"/>
<rect x="273" y="360" width="1" height="21" fill="#ffffff"/>
<rect x="207" y="361" width="66" height="1" fill="#696969"/>
<rect x="207" y="361" width="1" height="19" fill="#696969"/>
<rect x="207" y="379" width="66" height="1" fill="#e3e3e3"/>
<rect x="272" y="361" width="1" height="19" fill="#e3e3e3"/>
<rect x="274" y="360" width="68" height="21" fill="#ffffff"/>
<rect x="274" y="360" width="68" height="1" fill="#a0a0a0"/>
<rect x="274" y="360" width="1" height="21" fill="#a0a0a0"/>
<rect x="274" y="380" width="68" height="1" fill="#ffffff"/>
<rect x="341" y="360" width="1" height="21" fill="#ffffff"/>
<rect x="275" y="361" width="66" height="1" fill="#696969"/>
<rect x="275" y="361" width="1" height="19" fill="#696969"/>
<rect x="275" y="379" width="66" height="1" fill="#e3e3e3"/>
<rect x="340" y="361" width="1" height="19" fill="#e3e3e3"/>
<text x="277.5" y="374" fill="#6d6d6d" font-size="12" textLength="32.48" lengthAdjust="spacingAndGlyphs">0.0533</text>
<rect x="344" y="360" width="107" height="21" fill="#ffffff"/>
<rect x="344" y="360" width="107" height="1" fill="#a0a0a0"/>
<rect x="344" y="360" width="1" height="21" fill="#a0a0a0"/>
<rect x="344" y="380" width="107" height="1" fill="#ffffff"/>
<rect x="450" y="360" width="1" height="21" fill="#ffffff"/>
<rect x="345" y="361" width="105" height="1" fill="#696969"/>
<rect x="345" y="361" width="1" height="19" fill="#696969"/>
<rect x="345" y="379" width="105" height="1" fill="#e3e3e3"/>
<rect x="449" y="361" width="1" height="19" fill="#e3e3e3"/>
<rect x="432" y="362" width="17" height="17" fill="#f6f2f6"/>
<rect x="432" y="378" width="17" height="1" fill="#696969"/>
<rect x="448" y="362" width="1" height="17" fill="#696969"/>
<rect x="432" y="362" width="16" height="1" fill="#e3e3e3"/>
<rect x="432" y="362" width="1" height="16" fill="#e3e3e3"/>
<rect x="433" y="377" width="15" height="1" fill="#a0a0a0"/>
<rect x="447" y="363" width="1" height="15" fill="#a0a0a0"/>
<rect x="433" y="363" width="14" height="1" fill="#ffffff"/>
<rect x="433" y="363" width="1" height="14" fill="#ffffff"/>
<rect x="437" y="369" width="7" height="1" fill="#a0a0a0"/>
<rect x="438" y="370" width="5" height="1" fill="#a0a0a0"/>
<rect x="439" y="371" width="3" height="1" fill="#a0a0a0"/>
<rect x="440" y="372" width="1" height="1" fill="#a0a0a0"/>
<text x="348.5" y="375" fill="#6d6d6d" font-size="12" textLength="56.07" lengthAdjust="spacingAndGlyphs">Fixed Width</text>
<rect x="452" y="360" width="68" height="21" fill="#ffffff"/>
<rect x="452" y="360" width="68" height="1" fill="#a0a0a0"/>
<rect x="452" y="360" width="1" height="21" fill="#a0a0a0"/>
<rect x="452" y="380" width="68" height="1" fill="#ffffff"/>
<rect x="519" y="360" width="1" height="21" fill="#ffffff"/>
<rect x="453" y="361" width="66" height="1" fill="#696969"/>
<rect x="453" y="361" width="1" height="19" fill="#696969"/>
<rect x="453" y="379" width="66" height="1" fill="#e3e3e3"/>
<rect x="518" y="361" width="1" height="19" fill="#e3e3e3"/>
<text x="455.5" y="374" fill="#6d6d6d" font-size="12" textLength="20.67" lengthAdjust="spacingAndGlyphs">120.</text>
<rect x="521" y="360" width="68" height="21" fill="#ffffff"/>
<rect x="521" y="360" width="68" height="1" fill="#a0a0a0"/>
<rect x="521" y="360" width="1" height="21" fill="#a0a0a0"/>
<rect x="521" y="380" width="68" height="1" fill="#ffffff"/>
<rect x="588" y="360" width="1" height="21" fill="#ffffff"/>
<rect x="522" y="361" width="66" height="1" fill="#696969"/>
<rect x="522" y="361" width="1" height="19" fill="#696969"/>
<rect x="522" y="379" width="66" height="1" fill="#e3e3e3"/>
<rect x="587" y="361" width="1" height="19" fill="#e3e3e3"/>
<text x="524.5" y="374" fill="#6d6d6d" font-size="12" textLength="26.58" lengthAdjust="spacingAndGlyphs">10.64</text>
<rect x="590" y="360" width="107" height="21" fill="#ffffff"/>
<rect x="590" y="360" width="107" height="1" fill="#a0a0a0"/>
<rect x="590" y="360" width="1" height="21" fill="#a0a0a0"/>
<rect x="590" y="380" width="107" height="1" fill="#ffffff"/>
<rect x="696" y="360" width="1" height="21" fill="#ffffff"/>
<rect x="591" y="361" width="105" height="1" fill="#696969"/>
<rect x="591" y="361" width="1" height="19" fill="#696969"/>
<rect x="591" y="379" width="105" height="1" fill="#e3e3e3"/>
<rect x="695" y="361" width="1" height="19" fill="#e3e3e3"/>
<rect x="678" y="362" width="17" height="17" fill="#f6f2f6"/>
<rect x="678" y="378" width="17" height="1" fill="#696969"/>
<rect x="694" y="362" width="1" height="17" fill="#696969"/>
<rect x="678" y="362" width="16" height="1" fill="#e3e3e3"/>
<rect x="678" y="362" width="1" height="16" fill="#e3e3e3"/>
<rect x="679" y="377" width="15" height="1" fill="#a0a0a0"/>
<rect x="693" y="363" width="1" height="15" fill="#a0a0a0"/>
<rect x="679" y="363" width="14" height="1" fill="#ffffff"/>
<rect x="679" y="363" width="1" height="14" fill="#ffffff"/>
<rect x="683" y="369" width="7" height="1" fill="#a0a0a0"/>
<rect x="684" y="370" width="5" height="1" fill="#a0a0a0"/>
<rect x="685" y="371" width="3" height="1" fill="#a0a0a0"/>
<rect x="686" y="372" width="1" height="1" fill="#a0a0a0"/>
<text x="594.5" y="375" fill="#6d6d6d" font-size="12" textLength="51.94" lengthAdjust="spacingAndGlyphs">Two Points</text>
<rect x="698" y="360" width="68" height="21" fill="#ffffff"/>
<rect x="698" y="360" width="68" height="1" fill="#a0a0a0"/>
<rect x="698" y="360" width="1" height="21" fill="#a0a0a0"/>
<rect x="698" y="380" width="68" height="1" fill="#ffffff"/>
<rect x="765" y="360" width="1" height="21" fill="#ffffff"/>
<rect x="699" y="361" width="66" height="1" fill="#696969"/>
<rect x="699" y="361" width="1" height="19" fill="#696969"/>
<rect x="699" y="379" width="66" height="1" fill="#e3e3e3"/>
<rect x="764" y="361" width="1" height="19" fill="#e3e3e3"/>
<text x="701.5" y="374" fill="#6d6d6d" font-size="12" textLength="14.76" lengthAdjust="spacingAndGlyphs">72.</text>
<rect x="29" y="382" width="107" height="95" fill="#ffffff"/>
<rect x="29" y="382" width="107" height="1" fill="#a0a0a0"/>
<rect x="29" y="382" width="1" height="95" fill="#a0a0a0"/>
<rect x="29" y="476" width="107" height="1" fill="#ffffff"/>
<rect x="135" y="382" width="1" height="95" fill="#ffffff"/>
<rect x="30" y="383" width="105" height="1" fill="#696969"/>
<rect x="30" y="383" width="1" height="93" fill="#696969"/>
<rect x="30" y="475" width="105" height="1" fill="#e3e3e3"/>
<rect x="134" y="383" width="1" height="93" fill="#e3e3e3"/>
<rect x="31" y="384" width="103" height="13" fill="#3399ff"/>
<text x="33.5" y="395" fill="#fff" font-size="12" textLength="64.37" lengthAdjust="spacingAndGlyphs">Leading Load</text>
<text x="33.5" y="408" fill="#000" font-size="12" textLength="61.4" lengthAdjust="spacingAndGlyphs">Fixed Length</text>
<text x="33.5" y="421" fill="#000" font-size="12" textLength="73.61" lengthAdjust="spacingAndGlyphs">Variable Length</text>
<text x="33.5" y="434" fill="#000" font-size="12" textLength="61.0" lengthAdjust="spacingAndGlyphs">Trailing Load</text>
<rect x="137" y="382" width="68" height="95" fill="#ffffff"/>
<rect x="137" y="382" width="68" height="1" fill="#a0a0a0"/>
<rect x="137" y="382" width="1" height="95" fill="#a0a0a0"/>
<rect x="137" y="476" width="68" height="1" fill="#ffffff"/>
<rect x="204" y="382" width="1" height="95" fill="#ffffff"/>
<rect x="138" y="383" width="66" height="1" fill="#696969"/>
<rect x="138" y="383" width="1" height="93" fill="#696969"/>
<rect x="138" y="475" width="66" height="1" fill="#e3e3e3"/>
<rect x="203" y="383" width="1" height="93" fill="#e3e3e3"/>
<rect x="139" y="384" width="64" height="13" fill="#3399ff"/>
<text x="141.5" y="395" fill="#fff" font-size="12" textLength="31.29" lengthAdjust="spacingAndGlyphs">Infinite</text>
<text x="141.5" y="408" fill="#000" font-size="12" textLength="20.67" lengthAdjust="spacingAndGlyphs">168.</text>
<text x="141.5" y="421" fill="#000" font-size="12" textLength="20.67" lengthAdjust="spacingAndGlyphs">168.</text>
<text x="141.5" y="434" fill="#000" font-size="12" textLength="31.29" lengthAdjust="spacingAndGlyphs">Infinite</text>
<rect x="206" y="382" width="68" height="95" fill="#ffffff"/>
<rect x="206" y="382" width="68" height="1" fill="#a0a0a0"/>
<rect x="206" y="382" width="1" height="95" fill="#a0a0a0"/>
<rect x="206" y="476" width="68" height="1" fill="#ffffff"/>
<rect x="273" y="382" width="1" height="95" fill="#ffffff"/>
<rect x="207" y="383" width="66" height="1" fill="#696969"/>
<rect x="207" y="383" width="1" height="93" fill="#696969"/>
<rect x="207" y="475" width="66" height="1" fill="#e3e3e3"/>
<rect x="272" y="383" width="1" height="93" fill="#e3e3e3"/>
<rect x="208" y="384" width="64" height="13" fill="#3399ff"/>
<text x="210.5" y="421" fill="#000" font-size="12" textLength="20.67" lengthAdjust="spacingAndGlyphs">360.</text>
<rect x="274" y="382" width="68" height="95" fill="#ffffff"/>
<rect x="274" y="382" width="68" height="1" fill="#a0a0a0"/>
<rect x="274" y="382" width="1" height="95" fill="#a0a0a0"/>
<rect x="274" y="476" width="68" height="1" fill="#ffffff"/>
<rect x="341" y="382" width="1" height="95" fill="#ffffff"/>
<rect x="275" y="383" width="66" height="1" fill="#696969"/>
<rect x="275" y="383" width="1" height="93" fill="#696969"/>
<rect x="275" y="475" width="66" height="1" fill="#e3e3e3"/>
<rect x="340" y="383" width="1" height="93" fill="#e3e3e3"/>
<rect x="276" y="384" width="64" height="13" fill="#3399ff"/>
<text x="278.5" y="395" fill="#fff" font-size="12" textLength="32.48" lengthAdjust="spacingAndGlyphs">0.0533</text>
<text x="278.5" y="408" fill="#000" font-size="12" textLength="32.48" lengthAdjust="spacingAndGlyphs">0.0533</text>
<text x="278.5" y="421" fill="#000" font-size="12" textLength="32.48" lengthAdjust="spacingAndGlyphs">0.0533</text>
<text x="278.5" y="434" fill="#000" font-size="12" textLength="32.48" lengthAdjust="spacingAndGlyphs">0.0533</text>
<rect x="344" y="382" width="107" height="95" fill="#ffffff"/>
<rect x="344" y="382" width="107" height="1" fill="#a0a0a0"/>
<rect x="344" y="382" width="1" height="95" fill="#a0a0a0"/>
<rect x="344" y="476" width="107" height="1" fill="#ffffff"/>
<rect x="450" y="382" width="1" height="95" fill="#ffffff"/>
<rect x="345" y="383" width="105" height="1" fill="#696969"/>
<rect x="345" y="383" width="1" height="93" fill="#696969"/>
<rect x="345" y="475" width="105" height="1" fill="#e3e3e3"/>
<rect x="449" y="383" width="1" height="93" fill="#e3e3e3"/>
<rect x="346" y="384" width="103" height="13" fill="#3399ff"/>
<text x="348.5" y="395" fill="#fff" font-size="12" textLength="56.07" lengthAdjust="spacingAndGlyphs">Fixed Width</text>
<text x="348.5" y="408" fill="#000" font-size="12" textLength="56.07" lengthAdjust="spacingAndGlyphs">Fixed Width</text>
<text x="348.5" y="421" fill="#000" font-size="12" textLength="56.07" lengthAdjust="spacingAndGlyphs">Fixed Width</text>
<text x="348.5" y="434" fill="#000" font-size="12" textLength="56.07" lengthAdjust="spacingAndGlyphs">Fixed Width</text>
<rect x="452" y="382" width="68" height="95" fill="#ffffff"/>
<rect x="452" y="382" width="68" height="1" fill="#a0a0a0"/>
<rect x="452" y="382" width="1" height="95" fill="#a0a0a0"/>
<rect x="452" y="476" width="68" height="1" fill="#ffffff"/>
<rect x="519" y="382" width="1" height="95" fill="#ffffff"/>
<rect x="453" y="383" width="66" height="1" fill="#696969"/>
<rect x="453" y="383" width="1" height="93" fill="#696969"/>
<rect x="453" y="475" width="66" height="1" fill="#e3e3e3"/>
<rect x="518" y="383" width="1" height="93" fill="#e3e3e3"/>
<rect x="454" y="384" width="64" height="13" fill="#3399ff"/>
<text x="456.5" y="395" fill="#fff" font-size="12" textLength="20.67" lengthAdjust="spacingAndGlyphs">120.</text>
<text x="456.5" y="408" fill="#000" font-size="12" textLength="20.67" lengthAdjust="spacingAndGlyphs">120.</text>
<text x="456.5" y="421" fill="#000" font-size="12" textLength="20.67" lengthAdjust="spacingAndGlyphs">120.</text>
<text x="456.5" y="434" fill="#000" font-size="12" textLength="20.67" lengthAdjust="spacingAndGlyphs">120.</text>
<rect x="521" y="382" width="68" height="95" fill="#ffffff"/>
<rect x="521" y="382" width="68" height="1" fill="#a0a0a0"/>
<rect x="521" y="382" width="1" height="95" fill="#a0a0a0"/>
<rect x="521" y="476" width="68" height="1" fill="#ffffff"/>
<rect x="588" y="382" width="1" height="95" fill="#ffffff"/>
<rect x="522" y="383" width="66" height="1" fill="#696969"/>
<rect x="522" y="383" width="1" height="93" fill="#696969"/>
<rect x="522" y="475" width="66" height="1" fill="#e3e3e3"/>
<rect x="587" y="383" width="1" height="93" fill="#e3e3e3"/>
<rect x="523" y="384" width="64" height="13" fill="#3399ff"/>
<text x="525.5" y="395" fill="#fff" font-size="12" textLength="26.58" lengthAdjust="spacingAndGlyphs">10.64</text>
<text x="525.5" y="408" fill="#000" font-size="12" textLength="26.58" lengthAdjust="spacingAndGlyphs">42.56</text>
<text x="525.5" y="421" fill="#000" font-size="12" textLength="26.58" lengthAdjust="spacingAndGlyphs">42.56</text>
<rect x="590" y="382" width="107" height="95" fill="#ffffff"/>
<rect x="590" y="382" width="107" height="1" fill="#a0a0a0"/>
<rect x="590" y="382" width="1" height="95" fill="#a0a0a0"/>
<rect x="590" y="476" width="107" height="1" fill="#ffffff"/>
<rect x="696" y="382" width="1" height="95" fill="#ffffff"/>
<rect x="591" y="383" width="105" height="1" fill="#696969"/>
<rect x="591" y="383" width="1" height="93" fill="#696969"/>
<rect x="591" y="475" width="105" height="1" fill="#e3e3e3"/>
<rect x="695" y="383" width="1" height="93" fill="#e3e3e3"/>
<rect x="592" y="384" width="103" height="13" fill="#3399ff"/>
<text x="594.5" y="395" fill="#fff" font-size="12" textLength="51.94" lengthAdjust="spacingAndGlyphs">Two Points</text>
<text x="594.5" y="408" fill="#000" font-size="12" textLength="51.94" lengthAdjust="spacingAndGlyphs">Two Points</text>
<text x="594.5" y="421" fill="#000" font-size="12" textLength="51.94" lengthAdjust="spacingAndGlyphs">Two Points</text>
<rect x="698" y="382" width="68" height="95" fill="#ffffff"/>
<rect x="698" y="382" width="68" height="1" fill="#a0a0a0"/>
<rect x="698" y="382" width="1" height="95" fill="#a0a0a0"/>
<rect x="698" y="476" width="68" height="1" fill="#ffffff"/>
<rect x="765" y="382" width="1" height="95" fill="#ffffff"/>
<rect x="699" y="383" width="66" height="1" fill="#696969"/>
<rect x="699" y="383" width="1" height="93" fill="#696969"/>
<rect x="699" y="475" width="66" height="1" fill="#e3e3e3"/>
<rect x="764" y="383" width="1" height="93" fill="#e3e3e3"/>
<rect x="700" y="384" width="64" height="13" fill="#3399ff"/>
<text x="702.5" y="395" fill="#fff" font-size="12" textLength="14.76" lengthAdjust="spacingAndGlyphs">72.</text>
<text x="702.5" y="408" fill="#000" font-size="12" textLength="14.76" lengthAdjust="spacingAndGlyphs">72.</text>
<text x="702.5" y="421" fill="#000" font-size="12" textLength="14.76" lengthAdjust="spacingAndGlyphs">72.</text>
<rect x="239" y="499" width="60" height="20" fill="#f6f2f6"/>
<rect x="239" y="518" width="60" height="1" fill="#696969"/>
<rect x="298" y="499" width="1" height="20" fill="#696969"/>
<rect x="239" y="499" width="59" height="1" fill="#e3e3e3"/>
<rect x="239" y="499" width="1" height="19" fill="#e3e3e3"/>
<rect x="240" y="517" width="58" height="1" fill="#a0a0a0"/>
<rect x="297" y="500" width="1" height="18" fill="#a0a0a0"/>
<rect x="240" y="500" width="57" height="1" fill="#ffffff"/>
<rect x="240" y="500" width="1" height="17" fill="#ffffff"/>
<text x="258.5" y="513" fill="#a0a0a0" font-size="12" textLength="19.0" lengthAdjust="spacingAndGlyphs">Add</text>
<rect x="326" y="499" width="60" height="20" fill="#f6f2f6"/>
<rect x="326" y="518" width="60" height="1" fill="#696969"/>
<rect x="385" y="499" width="1" height="20" fill="#696969"/>
<rect x="326" y="499" width="59" height="1" fill="#e3e3e3"/>
<rect x="326" y="499" width="1" height="19" fill="#e3e3e3"/>
<rect x="327" y="517" width="58" height="1" fill="#a0a0a0"/>
<rect x="384" y="500" width="1" height="18" fill="#a0a0a0"/>
<rect x="327" y="500" width="57" height="1" fill="#ffffff"/>
<rect x="327" y="500" width="1" height="17" fill="#ffffff"/>
<text x="341.5" y="513" fill="#a0a0a0" font-size="12" textLength="27.0" lengthAdjust="spacingAndGlyphs">Insert</text>
<rect x="412" y="499" width="60" height="20" fill="#f6f2f6"/>
<rect x="412" y="518" width="60" height="1" fill="#696969"/>
<rect x="471" y="499" width="1" height="20" fill="#696969"/>
<rect x="412" y="499" width="59" height="1" fill="#e3e3e3"/>
<rect x="412" y="499" width="1" height="19" fill="#e3e3e3"/>
<rect x="413" y="517" width="58" height="1" fill="#a0a0a0"/>
<rect x="470" y="500" width="1" height="18" fill="#a0a0a0"/>
<rect x="413" y="500" width="57" height="1" fill="#ffffff"/>
<rect x="413" y="500" width="1" height="17" fill="#ffffff"/>
<text x="426.5" y="513" fill="#a0a0a0" font-size="12" textLength="30.0" lengthAdjust="spacingAndGlyphs">Modify</text>
<rect x="499" y="499" width="60" height="20" fill="#f6f2f6"/>
<rect x="499" y="518" width="60" height="1" fill="#696969"/>
<rect x="558" y="499" width="1" height="20" fill="#696969"/>
<rect x="499" y="499" width="59" height="1" fill="#e3e3e3"/>
<rect x="499" y="499" width="1" height="19" fill="#e3e3e3"/>
<rect x="500" y="517" width="58" height="1" fill="#a0a0a0"/>
<rect x="557" y="500" width="1" height="18" fill="#a0a0a0"/>
<rect x="500" y="500" width="57" height="1" fill="#ffffff"/>
<rect x="500" y="500" width="1" height="17" fill="#ffffff"/>
<text x="513.5" y="513" fill="#a0a0a0" font-size="12" textLength="30.0" lengthAdjust="spacingAndGlyphs">Delete</text>
<rect x="23" y="541" width="13" height="13" fill="#f6f2f6"/>
<rect x="23" y="541" width="13" height="1" fill="#a0a0a0"/>
<rect x="23" y="541" width="1" height="13" fill="#a0a0a0"/>
<rect x="23" y="553" width="13" height="1" fill="#ffffff"/>
<rect x="35" y="541" width="1" height="13" fill="#ffffff"/>
<rect x="24" y="542" width="11" height="1" fill="#696969"/>
<rect x="24" y="542" width="1" height="11" fill="#696969"/>
<rect x="24" y="552" width="11" height="1" fill="#e3e3e3"/>
<rect x="34" y="542" width="1" height="11" fill="#e3e3e3"/>
<text x="43.5" y="551" fill="#a0a0a0" font-size="12" textLength="237.0" lengthAdjust="spacingAndGlyphs">Vehicle Applies To Straddle (Adjacent) Lanes Only</text>
<rect x="23" y="561" width="13" height="13" fill="#f6f2f6"/>
<rect x="23" y="561" width="13" height="1" fill="#a0a0a0"/>
<rect x="23" y="561" width="1" height="13" fill="#a0a0a0"/>
<rect x="23" y="573" width="13" height="1" fill="#ffffff"/>
<rect x="35" y="561" width="1" height="13" fill="#ffffff"/>
<rect x="24" y="562" width="11" height="1" fill="#696969"/>
<rect x="24" y="562" width="1" height="11" fill="#696969"/>
<rect x="24" y="572" width="11" height="1" fill="#e3e3e3"/>
<rect x="34" y="562" width="1" height="11" fill="#e3e3e3"/>
<text x="40.5" y="571" fill="#a0a0a0" font-size="12" textLength="292.0" lengthAdjust="spacingAndGlyphs">Vehicle Remains Fully In Lane (In Lane Longitudinal Direction)</text>
<text x="306.5" y="551" fill="#000" font-size="12" textLength="124.0" lengthAdjust="spacingAndGlyphs">Straddle Reduction Factor</text>
<rect x="454" y="538" width="88" height="19" fill="#f6f2f6"/>
<rect x="454" y="538" width="88" height="1" fill="#a0a0a0"/>
<rect x="454" y="538" width="1" height="19" fill="#a0a0a0"/>
<rect x="454" y="556" width="88" height="1" fill="#ffffff"/>
<rect x="541" y="538" width="1" height="19" fill="#ffffff"/>
<rect x="455" y="539" width="86" height="1" fill="#696969"/>
<rect x="455" y="539" width="1" height="17" fill="#696969"/>
<rect x="455" y="555" width="86" height="1" fill="#e3e3e3"/>
<rect x="540" y="539" width="1" height="17" fill="#e3e3e3"/>
<rect x="607" y="550" width="60" height="20" fill="#f6f2f6"/>
<rect x="607" y="569" width="60" height="1" fill="#696969"/>
<rect x="666" y="550" width="1" height="20" fill="#696969"/>
<rect x="607" y="550" width="59" height="1" fill="#e3e3e3"/>
<rect x="607" y="550" width="1" height="19" fill="#e3e3e3"/>
<rect x="608" y="568" width="58" height="1" fill="#a0a0a0"/>
<rect x="665" y="551" width="1" height="18" fill="#a0a0a0"/>
<rect x="608" y="551" width="57" height="1" fill="#ffffff"/>
<rect x="608" y="551" width="1" height="17" fill="#ffffff"/>
<text x="629.5" y="564" fill="#a0a0a0" font-size="12" textLength="14.0" lengthAdjust="spacingAndGlyphs">OK</text>
<rect x="707" y="550" width="60" height="20" fill="#696969"/>
<rect x="708" y="551" width="58" height="18" fill="#f6f2f6"/>
<rect x="708" y="568" width="58" height="1" fill="#696969"/>
<rect x="765" y="551" width="1" height="18" fill="#696969"/>
<rect x="708" y="551" width="57" height="1" fill="#e3e3e3"/>
<rect x="708" y="551" width="1" height="17" fill="#e3e3e3"/>
<rect x="709" y="567" width="56" height="1" fill="#a0a0a0"/>
<rect x="764" y="552" width="1" height="16" fill="#a0a0a0"/>
<rect x="709" y="552" width="55" height="1" fill="#ffffff"/>
<rect x="709" y="552" width="1" height="15" fill="#ffffff"/>
<rect x="708" y="551" width="58" height="1" fill="#ffffff"/>
<rect x="708" y="551" width="1" height="18" fill="#ffffff"/>
<rect x="711.5" y="554.5" width="51" height="11" fill="none" stroke="#000" stroke-width="1" stroke-dasharray="1,1" shape-rendering="crispEdges"/>
<text x="720.5" y="564" fill="#000" font-size="12" textLength="33.0" lengthAdjust="spacingAndGlyphs">Cancel</text>
</svg>
</body></html>
